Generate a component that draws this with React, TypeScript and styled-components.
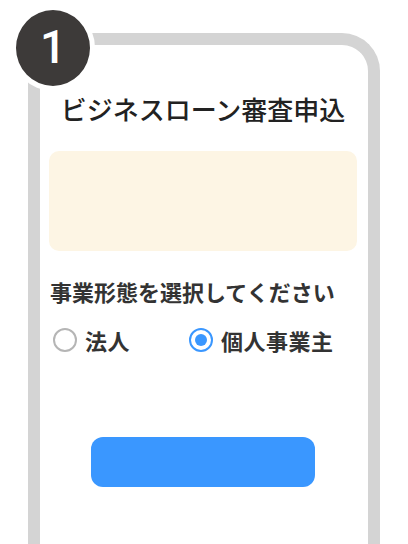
import styled, { createGlobalStyle } from 'styled-components';

const GlobalStyle = createGlobalStyle`
  html, body {
    margin: 0;
    padding: 0;
    background: #fff;
    overflow: hidden;
  }
  body {
    font-family: 'Noto Sans CJK JP', 'Noto Sans', sans-serif;
    color: #222;
  }
`;

const Page = styled.div`
  width: 408px;
  height: 544px;
  overflow: hidden;
  padding: 33px 0 0 28px;
  box-sizing: border-box;
`;

const Phone = styled.div`
  position: relative;
  width: 352px;
  min-height: 560px;
  box-sizing: border-box;
  border: 12px solid #d4d4d4;
  border-bottom: none;
  border-radius: 38px 38px 0 0;
  padding: 46px 11px 0 9px;
`;

const Badge = styled.div`
  position: absolute;
  left: -29px;
  top: -40px;
  width: 74px;
  height: 74px;
  border-radius: 50%;
  border: 5px solid #fff;
  background: #3d3a39;
  color: #fff;
  display: flex;
  align-items: center;
  justify-content: center;
  font-family: Roboto, 'Liberation Sans', sans-serif;
  font-size: 46px;
  font-weight: 500;
  line-height: 1;
  padding-bottom: 2px;
  box-sizing: content-box;
`;

const Title = styled.h1`
  margin: 0;
  text-align: center;
  font-size: 26px;
  font-weight: 500;
  line-height: 36px;
  color: #222;
`;

const Notice = styled.div`
  margin-top: 24px;
  height: 100px;
  border-radius: 10px;
  background: #fdf5e4;
`;

const Question = styled.p`
  margin: 26px 0 0 1px;
  font-size: 22px;
  font-weight: 700;
  line-height: 28px;
  color: #333;
`;

const Options = styled.div`
  margin-top: 21px;
  padding-left: 4px;
  display: grid;
  grid-template-columns: 136px auto;
  align-items: center;
`;

const Option = styled.label`
  display: flex;
  align-items: center;
  gap: 8px;
  font-size: 22px;
  font-weight: 700;
  line-height: 28px;
  letter-spacing: 0.5px;
  color: #333;
`;

const Radio = styled.span<{ $checked?: boolean }>`
  width: 24px;
  height: 24px;
  box-sizing: border-box;
  border-radius: 50%;
  border: 2px solid ${(p) => (p.$checked ? '#3a97ff' : '#b5b5b5')};
  display: flex;
  align-items: center;
  justify-content: center;

  &::after {
    content: '';
    width: 12px;
    height: 12px;
    border-radius: 50%;
    background: ${(p) => (p.$checked ? '#3a97ff' : 'transparent')};
  }
`;

const Actions = styled.div`
  margin-top: 83px;
  display: flex;
  justify-content: center;
`;

const Submit = styled.button`
  width: 224px;
  height: 50px;
  border: none;
  border-radius: 12px;
  background: #3a97ff;
`;

export default function App() {
  return (
    <Page>
      <GlobalStyle />
      <Phone>
        <Badge>1</Badge>
        <Title>ビジネスローン審査申込</Title>
        <Notice />
        <Question>事業形態を選択してください</Question>
        <Options>
          <Option>
            <Radio />
            法人
          </Option>
          <Option>
            <Radio $checked />
            個人事業主
          </Option>
        </Options>
        <Actions>
          <Submit type="button" aria-label="次へ" />
        </Actions>
      </Phone>
    </Page>
  );
}
